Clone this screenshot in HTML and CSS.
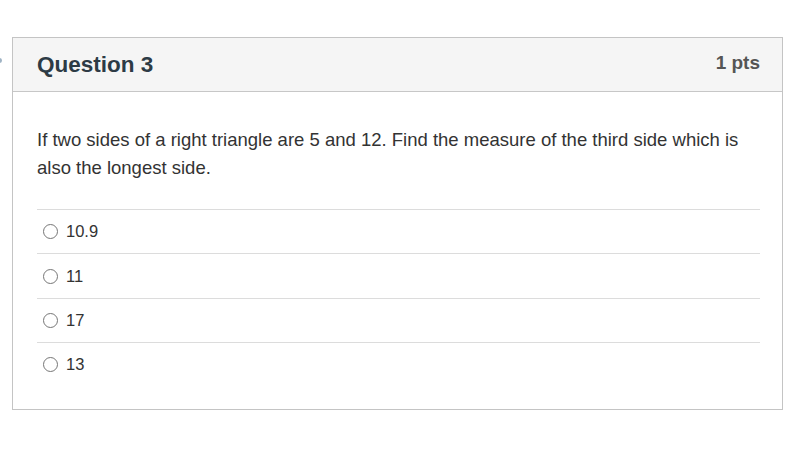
FILE: index.html
```html
<!DOCTYPE html>
<html>
<head>
<meta charset="utf-8">
<link rel="stylesheet" href="styles.css">
</head>
<body>
<span class="marker"></span>
<div class="card">
  <div class="card-header">
    <h2 class="title">Question 3</h2>
    <div class="pts">1 pts</div>
  </div>
  <div class="card-body">
    <p class="question">If two sides of a right triangle are 5 and 12. Find the measure of the third side which is also the longest side.</p>
    <div class="answers">
      <label class="answer"><span class="radio"></span><span>10.9</span></label>
      <label class="answer"><span class="radio"></span><span>11</span></label>
      <label class="answer"><span class="radio"></span><span>17</span></label>
      <label class="answer"><span class="radio"></span><span>13</span></label>
    </div>
  </div>
</div>
</body>
</html>
```
FILE: styles.css
```css
html, body { margin: 0; padding: 0; background: #fff; }
body {
  font-family: "Liberation Sans", Arial, sans-serif;
  color: #2d3b45;
  padding: 37px 17px 0 12px;
  position: relative;
}
.marker {
  position: absolute;
  left: -3px;
  top: 58px;
  width: 5px;
  height: 5px;
  border-radius: 50%;
  background: #9fb3c4;
}
.card {
  border: 1px solid #c4c4c4;
  box-sizing: border-box;
  width: 771px;
  height: 373px;
}
.card-header {
  background: #f5f5f5;
  border-bottom: 1px solid #c7c7c7;
  height: 53px;
  display: flex;
  justify-content: space-between;
  align-items: center;
  padding: 0 22px 0 24px;
}
.title {
  margin: 0;
  font-size: 22.5px;
  font-weight: bold;
  color: #2d3b45;
  padding-top: 1px;
}
.pts {
  font-size: 19px;
  font-weight: bold;
  color: #555;
  padding-bottom: 3px;
}
.card-body {
  padding: 34px 22px 0 24px;
}
.question {
  margin: 0;
  font-size: 18.5px;
  line-height: 28px;
  color: #333;
}
.answers {
  margin-top: 27px;
}
.answer {
  display: flex;
  align-items: center;
  gap: 8px;
  height: 43.4px;
  border-top: 1px solid #dcdcdc;
  padding-left: 6px;
  font-size: 16.5px;
  color: #333;
}
.radio {
  border: 1px solid #767676;
  border-radius: 50%;
  box-sizing: border-box;
  width: 15px;
  height: 15px;
}
```
